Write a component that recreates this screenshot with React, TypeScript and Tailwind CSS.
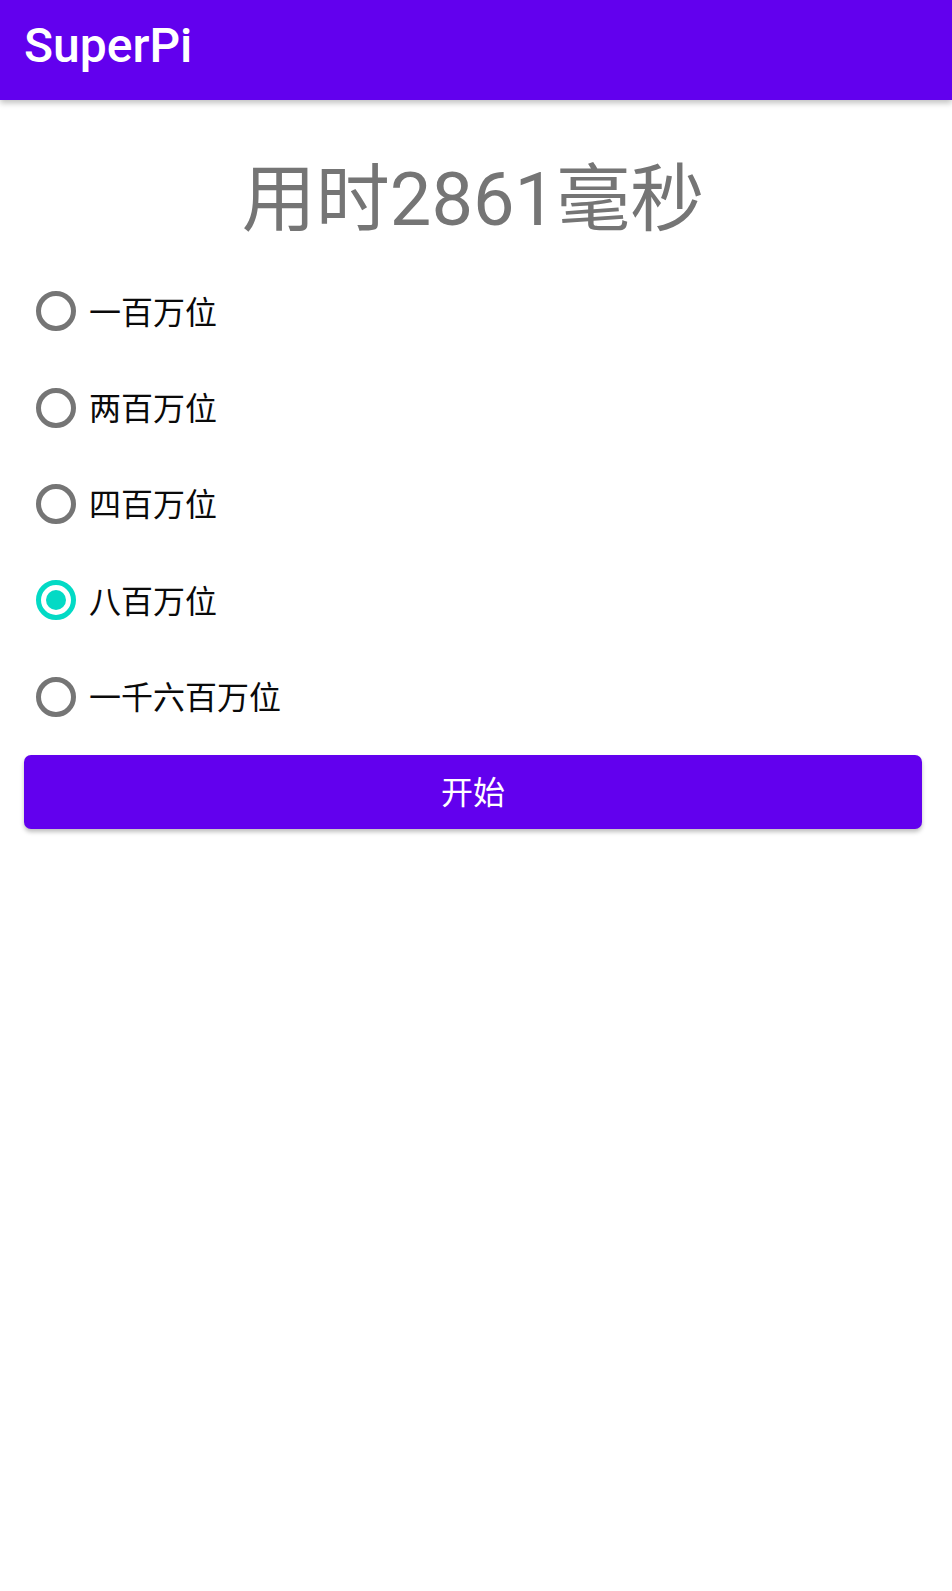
import React, { useState } from "react";

const options = [
  { value: "1m", label: "一百万位" },
  { value: "2m", label: "两百万位" },
  { value: "4m", label: "四百万位" },
  { value: "8m", label: "八百万位" },
  { value: "16m", label: "一千六百万位" },
];

const font = "font-['Roboto','Noto_Sans_CJK_SC',sans-serif]";

const App: React.FC = () => {
  // selected digits
  const [selected, setSelected] = useState<string>("8m");

  return (
    <div className={`min-h-[1591px] bg-white ${font}`}>
      {/* toolbar */}
      <div className="relative z-10 h-[100px] bg-[#6200ee] pl-[24px] pt-[22px] shadow-[0_3px_6px_rgba(0,0,0,0.25)]">
        <h1 className="text-[48px] font-medium leading-[48px] text-white">SuperPi</h1>
      </div>

      <div className="ml-[24px] mr-[30px]">
        <p className="mt-[56px] h-[88px] text-center text-[74px] leading-[88px] text-[#757575]">
          用时2861毫秒
        </p>

        <div className="mt-[19px] flex flex-col">
          {options.map((opt) => {
            const checked = selected === opt.value;
            return (
              <label
                key={opt.value}
                className="flex h-[96.4px] cursor-pointer items-center pl-[12px]"
              >
                <input
                  type="radio"
                  name="digits"
                  value={opt.value}
                  checked={checked}
                  onChange={(e) => setSelected(e.target.value)}
                  className="sr-only"
                />
                <span
                  className={`flex h-[40px] w-[40px] items-center justify-center rounded-full border-[5px] ${
                    checked ? "border-[#03dac5]" : "border-[#757575]"
                  }`}
                >
                  {checked && <span className="h-[20px] w-[20px] rounded-full bg-[#03dac5]" />}
                </span>
                <span className="ml-[13px] pt-[3px] text-[32px] leading-none text-[#0a0a0a]">{opt.label}</span>
              </label>
            );
          })}
        </div>

        <button
          type="button"
          className="mt-[10px] flex h-[74px] w-full items-center justify-center rounded-[7px] bg-[#6200ee] pt-[2px] text-[32px] text-white shadow-[0_3px_4px_rgba(0,0,0,0.25)]"
        >
          开始
        </button>
      </div>
    </div>
  );
};

export default App;
